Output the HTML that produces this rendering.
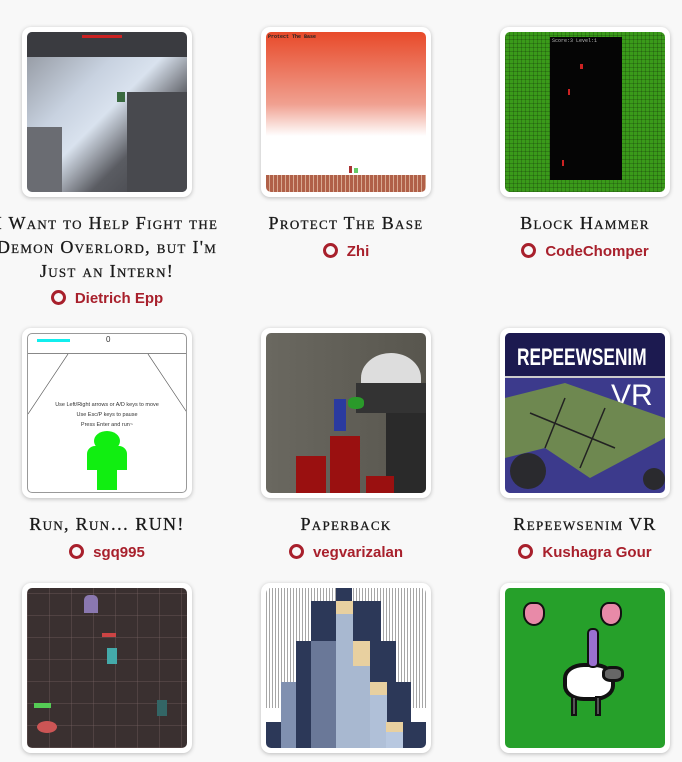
<!DOCTYPE html>
<html><head><meta charset="utf-8"><style>
*{margin:0;padding:0;box-sizing:border-box}
body{width:682px;height:762px;background:#f8f8f8;position:relative;overflow:hidden;font-family:"Liberation Sans",sans-serif}
.card{position:absolute;width:170px;height:170px;background:#fff;border-radius:9px;box-shadow:0 1px 4px rgba(0,0,0,.25);padding:5px}
.img{width:160px;height:160px;border-radius:5px;overflow:hidden;position:relative}
.t{position:absolute;width:260px;text-align:center;font-family:"Liberation Serif",serif;font-variant:small-caps;font-size:18px;letter-spacing:1.3px;color:#1a1a1a;line-height:24px;-webkit-text-stroke:.3px #1a1a1a}
.a{position:absolute;width:240px;text-align:center;font-weight:bold;font-size:15px;color:#a8202c;line-height:20px}
.a i{display:inline-block;width:15px;height:15px;border:3px solid #a8202c;border-radius:50%;vertical-align:-2px;margin-right:9px}
.ab{position:absolute}
</style></head><body>

<!-- row1 -->
<div class="card" style="left:22px;top:27px"><div class="img" style="background:linear-gradient(135deg,#8a8e96 0%,#c8d2e0 35%,#d9e2ee 50%,#5a5c62 70%,#3a3b40 100%)">
<div class="ab" style="left:0;top:0;width:160px;height:25px;background:#3a3b40"></div>
<div class="ab" style="left:55px;top:3px;width:40px;height:3px;background:#c22"></div>
<div class="ab" style="left:0;top:95px;width:35px;height:65px;background:#6a6c72"></div>
<div class="ab" style="left:100px;top:60px;width:60px;height:100px;background:#48494e"></div>
<div class="ab" style="left:90px;top:60px;width:8px;height:10px;background:#3a6a40"></div>
</div></div>
<div class="t" style="left:-23px;top:211px">I Want to Help Fight the<br>Demon Overlord, but I'm<br>Just an Intern!</div>
<div class="a" style="left:-13px;top:289px"><i></i>Dietrich Epp</div>

<div class="card" style="left:261px;top:27px"><div class="img" style="background:linear-gradient(#e84a2a 0%,#f0a090 45%,#fff 65%,#fff 100%)">
<div class="ab" style="left:2px;top:2px;font:bold 5px 'Liberation Mono',monospace;color:#222">Protect The Base</div>
<div class="ab" style="left:0;top:143px;width:160px;height:17px;background:repeating-linear-gradient(90deg,#b06048 0 3px,#d8a890 3px 4px)"></div>
<div class="ab" style="left:83px;top:134px;width:3px;height:7px;background:#a33"></div>
<div class="ab" style="left:88px;top:136px;width:4px;height:5px;background:#6c6"></div>
</div></div>
<div class="t" style="left:216px;top:211px">Protect The Base</div>
<div class="a" style="left:226px;top:242px"><i></i>Zhi</div>

<div class="card" style="left:500px;top:27px"><div class="img" style="background:#3a9a1a;background-image:repeating-linear-gradient(90deg,rgba(0,0,0,.18) 0 1px,transparent 1px 4px),repeating-linear-gradient(0deg,rgba(0,0,0,.18) 0 1px,transparent 1px 4px)">
<div class="ab" style="left:45px;top:5px;width:72px;height:143px;background:#050505"></div>
<div class="ab" style="left:47px;top:6px;font:5px 'Liberation Mono',monospace;color:#bbb">Score:3 Level:1</div>
<div class="ab" style="left:75px;top:32px;width:3px;height:5px;background:#c22"></div>
<div class="ab" style="left:63px;top:57px;width:2px;height:6px;background:#c22"></div>
<div class="ab" style="left:57px;top:128px;width:2px;height:6px;background:#c22"></div>
</div></div>
<div class="t" style="left:455px;top:211px">Block Hammer</div>
<div class="a" style="left:465px;top:242px"><i></i>CodeChomper</div>

<!-- row2 -->
<div class="card" style="left:22px;top:328px"><div class="img" style="background:#fff;border:1px solid #999">
<div class="ab" style="left:0;top:19px;width:158px;height:1px;background:#888"></div>
<div class="ab" style="left:9px;top:5px;width:33px;height:3px;background:#1ee"></div>
<div class="ab" style="left:78px;top:1px;font:8px sans-serif;color:#333">0</div>
<svg class="ab" style="left:0;top:0" width="160" height="160"><path d="M40 20 L0 80 M120 20 L160 80" stroke="#666" stroke-width=".7" fill="none"/></svg>
<div class="ab" style="left:0;top:66px;width:158px;text-align:center;font:5.5px sans-serif;color:#333;line-height:10px">Use Left/Right arrows or A/D keys to move<br>Use Esc/P keys to pause<br>Press Enter and run~</div>
<div class="ab" style="left:66px;top:97px;width:26px;height:20px;border-radius:50%;background:#1e1"></div>
<div class="ab" style="left:59px;top:112px;width:40px;height:24px;border-radius:8px 8px 0 0;background:#1e1"></div>
<div class="ab" style="left:69px;top:130px;width:20px;height:26px;background:#1e1"></div>
</div></div>
<div class="t" style="left:-23px;top:512px">Run, Run… RUN!</div>
<div class="a" style="left:-13px;top:543px"><i></i>sgq995</div>

<div class="card" style="left:261px;top:328px"><div class="img" style="background:linear-gradient(90deg,#6a6860,#58564e)">
<div class="ab" style="left:95px;top:20px;width:60px;height:50px;background:#ddd;border-radius:50% 50% 0 0"></div>
<div class="ab" style="left:90px;top:50px;width:70px;height:30px;background:#333"></div>
<div class="ab" style="left:120px;top:80px;width:40px;height:80px;background:#2a2a2a"></div>
<div class="ab" style="left:30px;top:123px;width:30px;height:37px;background:#9a1010"></div>
<div class="ab" style="left:64px;top:103px;width:30px;height:57px;background:#9a1010"></div>
<div class="ab" style="left:100px;top:143px;width:28px;height:17px;background:#9a1010"></div>
<div class="ab" style="left:68px;top:66px;width:12px;height:32px;background:#2a3aa0"></div>
<div class="ab" style="left:82px;top:64px;width:16px;height:12px;background:#2a9a2a;border-radius:40%"></div>
</div></div>
<div class="t" style="left:216px;top:512px">Paperback</div>
<div class="a" style="left:226px;top:543px"><i></i>vegvarizalan</div>

<div class="card" style="left:500px;top:328px"><div class="img" style="background:#3c3a8c">
<div class="ab" style="left:0;top:0;width:160px;height:45px;background:#1c1a50;border-bottom:2px solid #ccc"></div>
<div class="ab" style="left:12px;top:11px;font:bold 24px 'Liberation Sans',sans-serif;color:#fff;transform:scaleX(.72);transform-origin:0 0;white-space:nowrap">REPEEWSENIM</div>
<div class="ab" style="left:106px;top:46px;font:30px 'Liberation Sans',sans-serif;color:#fff">VR</div>
<svg class="ab" style="left:0;top:45px" width="160" height="115"><polygon points="0,20 60,5 160,40 160,60 85,100 40,70 0,80" fill="#6e8850"/><path d="M25 35 L110 70 M60 20 L40 70 M100 30 L75 90" stroke="#222" stroke-width="1.5"/></svg>
<div class="ab" style="left:5px;top:120px;width:36px;height:36px;border-radius:50%;background:#2a2a2e"></div>
<div class="ab" style="left:138px;top:135px;width:22px;height:22px;border-radius:50%;background:#2a2a2e"></div>
</div></div>
<div class="t" style="left:455px;top:512px">Repeewsenim VR</div>
<div class="a" style="left:465px;top:543px"><i></i>Kushagra Gour</div>

<!-- row3 -->
<div class="card" style="left:22px;top:583px"><div class="img" style="background:#3a3030;background-image:repeating-linear-gradient(90deg,rgba(120,100,100,.35) 0 1px,transparent 1px 22px),repeating-linear-gradient(0deg,rgba(120,100,100,.35) 0 1px,transparent 1px 22px)">
<div class="ab" style="left:57px;top:7px;width:14px;height:18px;background:#8a78b0;border-radius:5px 5px 0 0"></div>
<div class="ab" style="left:75px;top:45px;width:14px;height:4px;background:#c44"></div>
<div class="ab" style="left:80px;top:60px;width:10px;height:16px;background:#4aa"></div>
<div class="ab" style="left:7px;top:115px;width:17px;height:5px;background:#5c5"></div>
<div class="ab" style="left:10px;top:133px;width:20px;height:12px;border-radius:50%;background:#c55"></div>
<div class="ab" style="left:130px;top:112px;width:10px;height:16px;background:#366"></div>
</div></div>

<div class="card" style="left:261px;top:583px"><div class="img" style="background:#fff">
<div class="ab" style="left:0;top:0;width:160px;height:120px;background:repeating-linear-gradient(90deg,#222 0 1px,#fff 1px 3px);opacity:.4"></div>
<div class="ab" style="left:70px;top:0;width:16px;height:160px;background:#2c3858"></div>
<div class="ab" style="left:45px;top:13px;width:70px;height:147px;background:#2c3858"></div>
<div class="ab" style="left:30px;top:53px;width:100px;height:107px;background:#2c3858"></div>
<div class="ab" style="left:15px;top:94px;width:130px;height:66px;background:#2c3858"></div>
<div class="ab" style="left:0;top:134px;width:160px;height:26px;background:#2c3858"></div>
<div class="ab" style="left:70px;top:13px;width:17px;height:147px;background:#a8b8d0"></div>
<div class="ab" style="left:45px;top:53px;width:25px;height:107px;background:#6a7898"></div>
<div class="ab" style="left:87px;top:53px;width:17px;height:107px;background:#a8b8d0"></div>
<div class="ab" style="left:87px;top:53px;width:17px;height:25px;background:#e8d0a0"></div>
<div class="ab" style="left:70px;top:13px;width:17px;height:13px;background:#e8d0a0"></div>
<div class="ab" style="left:104px;top:94px;width:17px;height:66px;background:#b0c0d8"></div>
<div class="ab" style="left:104px;top:94px;width:17px;height:13px;background:#e8d0a0"></div>
<div class="ab" style="left:120px;top:134px;width:17px;height:26px;background:#b8c8e0"></div>
<div class="ab" style="left:120px;top:134px;width:17px;height:10px;background:#e8d0a0"></div>
<div class="ab" style="left:15px;top:94px;width:15px;height:66px;background:#8090b0"></div>
</div></div>

<div class="card" style="left:500px;top:583px"><div class="img" style="background:#26a02a">
<div class="ab" style="left:18px;top:14px;width:22px;height:24px;background:#e88aa8;border-radius:40% 40% 50% 50%;border:2px solid #111"></div>
<div class="ab" style="left:95px;top:14px;width:22px;height:24px;background:#e88aa8;border-radius:40% 40% 50% 50%;border:2px solid #111"></div>
<div class="ab" style="left:58px;top:75px;width:52px;height:38px;background:#fff;border:4px solid #111;border-radius:40%"></div>
<div class="ab" style="left:97px;top:78px;width:22px;height:16px;background:#666;border:3px solid #111;border-radius:40%"></div>
<div class="ab" style="left:66px;top:108px;width:6px;height:20px;background:#555;border:2px solid #111"></div>
<div class="ab" style="left:90px;top:108px;width:6px;height:20px;background:#555;border:2px solid #111"></div>
<div class="ab" style="left:82px;top:40px;width:12px;height:40px;background:#9a70d0;border-radius:5px;border:2px solid #111"></div>
</div></div>

</body></html>
